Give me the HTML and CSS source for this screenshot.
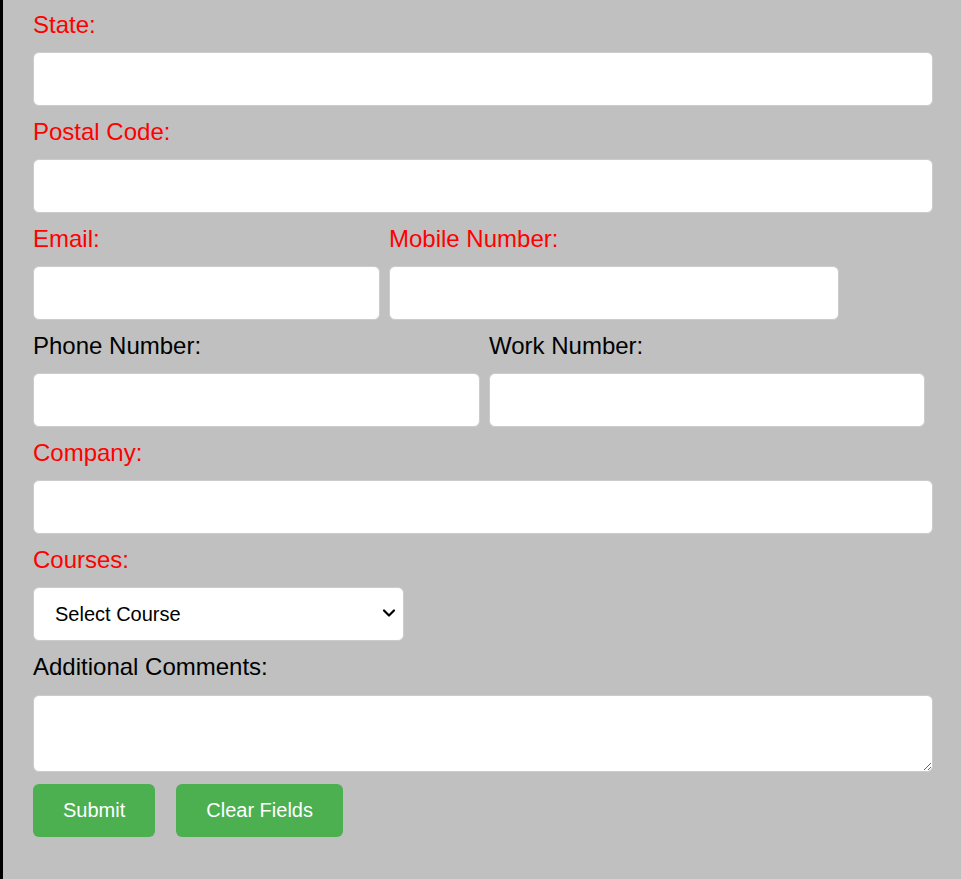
FILE: index.html
```html
<!DOCTYPE html>
<html>
<head>
<meta charset="utf-8">
<link rel="stylesheet" href="styles.css">
</head>
<body>
<div class="page">
  <form class="form">
    <div class="field">
      <label class="lbl req">State:</label>
      <input class="inp full" type="text">
    </div>
    <div class="field">
      <label class="lbl req">Postal Code:</label>
      <input class="inp full" type="text">
    </div>
    <div class="row">
      <div class="field">
        <label class="lbl req">Email:</label>
        <input class="inp w-email" type="text">
      </div>
      <div class="field">
        <label class="lbl req">Mobile Number:</label>
        <input class="inp w-mobile" type="text">
      </div>
    </div>
    <div class="row">
      <div class="field">
        <label class="lbl">Phone Number:</label>
        <input class="inp w-phone" type="text">
      </div>
      <div class="field">
        <label class="lbl">Work Number:</label>
        <input class="inp w-work" type="text">
      </div>
    </div>
    <div class="field">
      <label class="lbl req">Company:</label>
      <input class="inp full" type="text">
    </div>
    <div class="field">
      <label class="lbl req">Courses:</label>
      <div class="sel-wrap">
        <select class="inp sel">
          <option>Select Course</option>
        </select>
        <svg class="chev" width="14" height="10" viewBox="0 0 14 10" aria-hidden="true">
          <path d="M2 2.5 L7 7.5 L12 2.5" fill="none" stroke="#000" stroke-width="2.2" stroke-linecap="round" stroke-linejoin="round"/>
        </svg>
      </div>
    </div>
    <div class="field">
      <label class="lbl">Additional Comments:</label>
      <textarea class="inp ta"></textarea>
    </div>
    <div class="buttons">
      <button type="button" class="btn">Submit</button>
      <button type="button" class="btn">Clear Fields</button>
    </div>
  </form>
</div>
</body>
</html>
```
FILE: styles.css
```css
html, body {
  margin: 0;
  padding: 0;
  height: 100%;
}
body {
  background: #c0c0c0;
  font-family: "Liberation Sans", Arial, sans-serif;
  border-left: 3px solid #000;
  box-sizing: border-box;
  min-height: 879px;
}
.page {
  padding: 11px 0 0 30px;
}
.form {
  display: flex;
  flex-direction: column;
  width: 900px;
}
.field {
  display: flex;
  flex-direction: column;
}
.lbl {
  display: block;
  font-size: 24px;
  line-height: 28px;
  height: 28px;
  color: #000;
  margin-bottom: 13px;
  white-space: nowrap;
}
.lbl.req {
  color: #ff0000;
}
.inp {
  box-sizing: border-box;
  height: 54px;
  background: #fff;
  border: 1px solid #ccc;
  border-radius: 6px;
  margin: 0 0 12px 0;
  padding: 0 20px;
  font-family: "Liberation Sans", Arial, sans-serif;
  font-size: 20px;
  outline: none;
}
.full { width: 900px; }
.row {
  display: flex;
  gap: 9px;
}
.w-email { width: 347px; }
.w-mobile { width: 450px; }
.w-phone { width: 447px; }
.w-work { width: 436px; }
.sel-wrap {
  position: relative;
  width: 371px;
}
.sel {
  width: 371px;
  color: #000;
  padding: 0 36px 0 21px;
  -webkit-appearance: none;
  appearance: none;
  display: block;
}
.chev {
  position: absolute;
  left: 349px;
  top: 21px;
  pointer-events: none;
}
.ta {
  height: 77px;
  margin-top: 1px;
  margin-bottom: 12px;
  resize: both;
  display: block;
}
.buttons {
  display: flex;
  gap: 21px;
}
.btn {
  background: #4caf50;
  color: #fff;
  border: none;
  border-radius: 6px;
  font-family: "Liberation Sans", Arial, sans-serif;
  font-size: 20px;
  line-height: 23px;
  padding: 15px 30px;
  height: 53px;
  cursor: pointer;
}
```
